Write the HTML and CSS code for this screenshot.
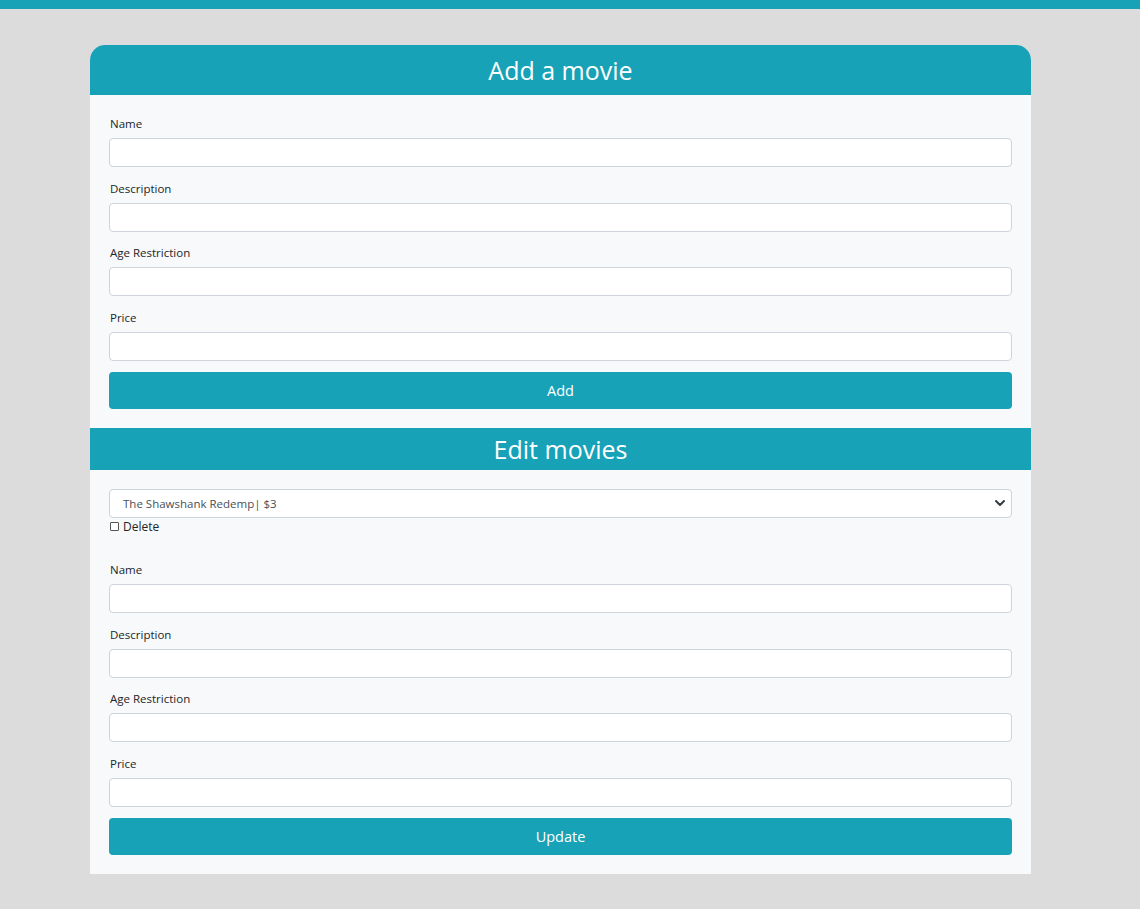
FILE: index.html
```html
<!DOCTYPE html>
<html>
<head>
<meta charset="utf-8">
<link rel="stylesheet" href="styles.css">
</head>
<body>
<div class="topbar"></div>
<main class="card">
  <h1 class="card-title first">Add a movie</h1>
  <section class="card-body">
    <div class="field"><label class="lbl">Name</label><input class="input" type="text"></div>
    <div class="field"><label class="lbl">Description</label><input class="input" type="text"></div>
    <div class="field"><label class="lbl">Age Restriction</label><input class="input" type="text"></div>
    <div class="field last"><label class="lbl">Price</label><input class="input" type="text"></div>
    <button class="btn">Add</button>
  </section>
  <h1 class="card-title second">Edit movies</h1>
  <section class="card-body edit">
    <div class="select">
      <span class="select-text">The Shawshank Redemp| $3</span>
      <svg class="chev" width="10" height="8" viewBox="0 0 10 8"><path d="M1 2 L5 6 L9 2" fill="none" stroke="#343a40" stroke-width="2" stroke-linecap="round" stroke-linejoin="round"/></svg>
    </div>
    <label class="check"><span class="box"></span>Delete</label>
    <div class="field"><label class="lbl">Name</label><input class="input" type="text"></div>
    <div class="field"><label class="lbl">Description</label><input class="input" type="text"></div>
    <div class="field"><label class="lbl">Age Restriction</label><input class="input" type="text"></div>
    <div class="field last"><label class="lbl">Price</label><input class="input" type="text"></div>
    <button class="btn">Update</button>
  </section>
</main>
</body>
</html>
```
FILE: styles.css
```css
* { box-sizing: border-box; }
body {
  margin: 0;
  background: #dcdcdc;
  font-family: "Open Sans", "Noto Sans", sans-serif;
  color: #212529;
  height: 909px;
  overflow: hidden;
}
.topbar { height: 9px; background: #17a2b8; }
.card {
  width: 941px;
  margin: 36px 0 0 90px;
  background: #f8f9fa;
  border-radius: 15px 15px 0 0;
}
.card-title {
  margin: 0;
  background: #17a2b8;
  color: #fff;
  font-weight: 400;
  font-size: 25px;
  text-align: center;
}
.card-title.first { height: 50px; line-height: 50px; border-radius: 15px 15px 0 0; }
.card-title.second { height: 42px; line-height: 42px; }
.card-body {
  padding: 20px 19px 19px;
  display: flex;
  flex-direction: column;
}
.card-body.edit { padding-top: 19px; }
.field { display: flex; flex-direction: column; margin-bottom: 12.67px; }
.field.last { margin-bottom: 11px; }
.lbl { font-size: 11.5px; line-height: 18px; margin-bottom: 5px; padding-left: 1px; }
.input {
  height: 29px;
  border: 1px solid #ced4da;
  border-radius: 4px;
  background: #fff;
  margin: 0;
}
.btn {
  height: 37px;
  border: none;
  border-radius: 4px;
  background: #17a2b8;
  color: #fff;
  font-family: inherit;
  font-size: 14.5px;
}
.select {
  height: 29px;
  border: 1px solid #ced4da;
  border-radius: 4px;
  background: #fff;
  display: flex;
  align-items: center;
  justify-content: space-between;
  padding: 0 6px 0 13px;
}
.select-text { font-size: 11.5px; color: #495057; }
.check {
  display: flex;
  align-items: center;
  font-size: 12px;
  line-height: 18px;
  margin-bottom: 25px;
  padding-left: 1px;
}
.box {
  width: 9px; height: 9px;
  border: 1px solid #555;
  border-radius: 1px;
  margin-right: 4px;
  background: #fff;
}
```
